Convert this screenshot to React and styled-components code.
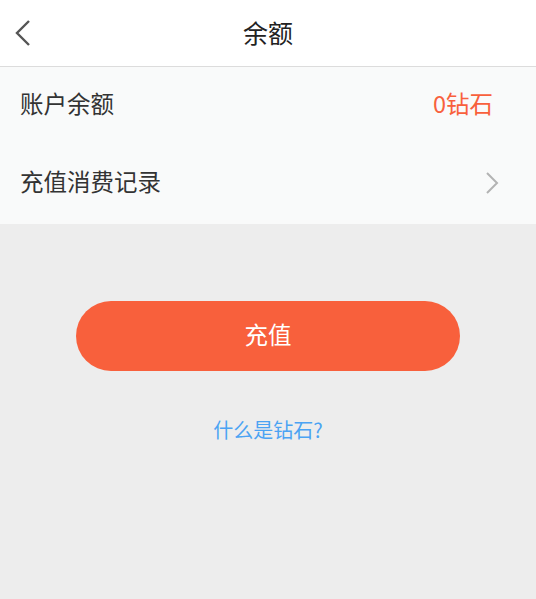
import React from "react";
import styled, { createGlobalStyle } from "styled-components";

const Global = createGlobalStyle`
  html, body { margin: 0; padding: 0; background: #ededed; }
  body { font-family: "Noto Sans CJK SC", "Noto Sans", sans-serif; }
`;

const Page = styled.div`
  width: 536px;
  min-height: 599px;
  background: #ededed;
  display: flex;
  flex-direction: column;
`;

const Header = styled.header`
  height: 66px;
  background: #ffffff;
  border-bottom: 1px solid #dcdcdc;
  display: flex;
  align-items: center;
  justify-content: center;
  position: relative;
`;

const Back = styled.button`
  position: absolute;
  left: 8px;
  top: 16px;
  width: 30px;
  height: 34px;
  border: 0;
  background: transparent;
  padding: 0;
  display: flex;
  align-items: center;
  justify-content: center;
`;

const Title = styled.h1`
  margin: 0 0 3px;
  font-size: 25px;
  font-weight: 400;
  color: #222;
`;

const List = styled.div`
  background: #f9fafa;
  display: flex;
  flex-direction: column;
`;

const Row = styled.div`
  height: ${(p) => p.$h}px;
  box-sizing: border-box;
  display: flex;
  align-items: center;
  justify-content: space-between;
  padding: 0 ${(p) => p.$pr}px 5px 20px;
`;

const Label = styled.span`
  font-size: 23.5px;
  font-weight: 400;
  color: #333;
`;

const Value = styled.span`
  font-size: 23.5px;
  font-weight: 400;
  color: #f8603c;
`;

const Chevron = styled.svg`
  margin-top: 4px;
`;

const Body = styled.div`
  display: flex;
  flex-direction: column;
  align-items: center;
  padding-top: 77px;
`;

const Button = styled.button`
  width: 384px;
  height: 70px;
  border: 0;
  border-radius: 35px;
  background: #f8603c;
  color: #ffffff;
  font-family: inherit;
  font-size: 23.5px;
  font-weight: 400;
  padding: 0 0 4px;
  display: flex;
  align-items: center;
  justify-content: center;
`;

const Link = styled.a`
  margin-top: 44px;
  font-size: 20px;
  font-weight: 400;
  color: #4ba3f3;
  text-decoration: none;
`;

export default function App() {
  return (
    <Page>
      <Global />
      <Header>
        <Back aria-label="back">
          <svg width="18" height="28" viewBox="0 0 18 28">
            <path d="M15 2 L3 14 L15 26" fill="none" stroke="#555" strokeWidth="2.4" />
          </svg>
        </Back>
        <Title>余额</Title>
      </Header>
      <List>
        <Row $h={76} $pr={43}>
          <Label>账户余额</Label>
          <Value>0钻石</Value>
        </Row>
        <Row $h={81} $pr={37}>
          <Label>充值消费记录</Label>
          <Chevron width="14" height="24" viewBox="0 0 14 24">
            <path d="M2 2 L12 12 L2 22" fill="none" stroke="#b3b3b3" strokeWidth="2" />
          </Chevron>
        </Row>
      </List>
      <Body>
        <Button>充值</Button>
        <Link>什么是钻石?</Link>
      </Body>
    </Page>
  );
}
